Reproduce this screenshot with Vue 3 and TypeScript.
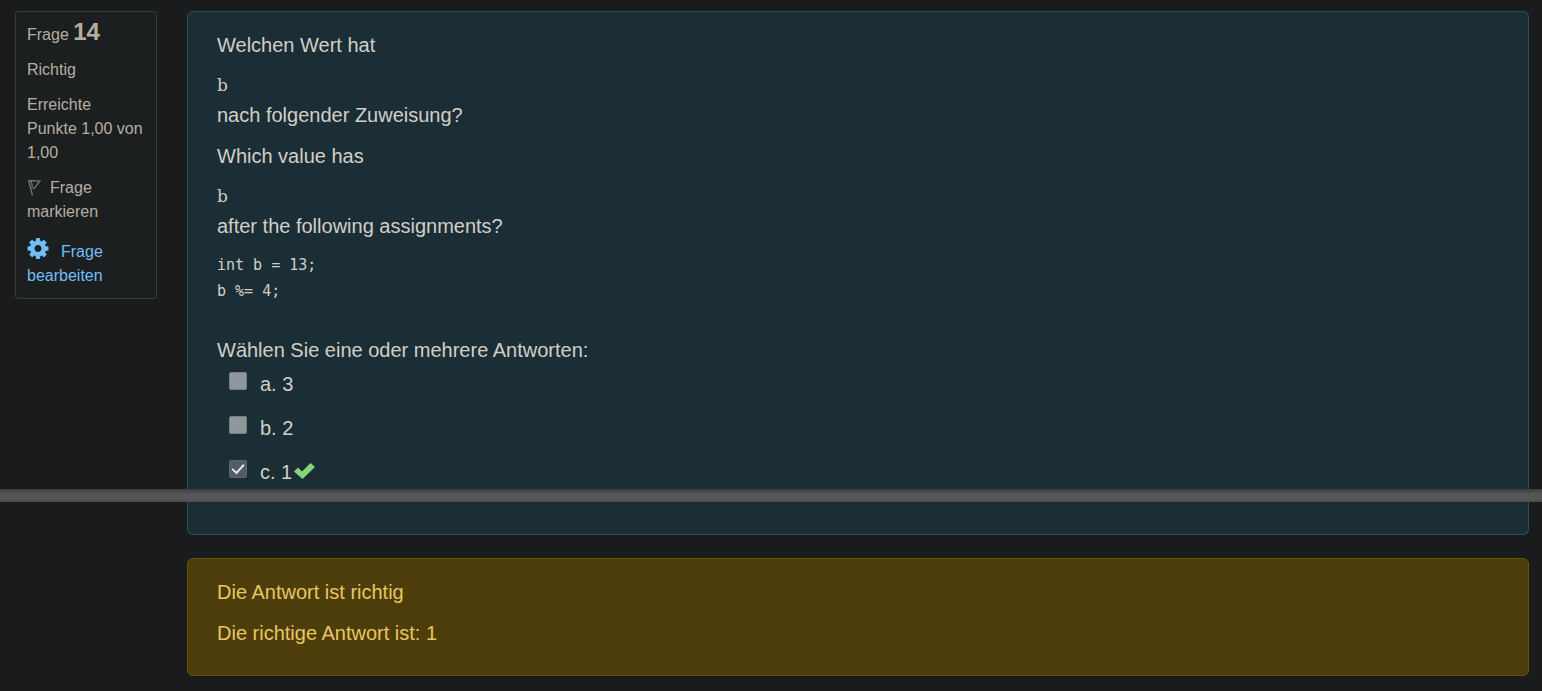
<script setup lang="ts">
import { ref } from 'vue'

interface Answer {
  id: string
  label: string
  correct: boolean
}

const answers: Answer[] = [
  { id: 'answer-a', label: 'a. 3', correct: false },
  { id: 'answer-b', label: 'b. 2', correct: false },
  { id: 'answer-c', label: 'c. 1', correct: true },
]
const selected = ref<string[]>(['answer-c'])
const snippet = 'int b = 13;\nb %= 4;'
</script>

<template>
  <main class="page">
    <div class="question">
      <aside class="info">
        <h3 class="number">Frage <strong>14</strong></h3>
        <p class="state">Richtig</p>
        <p class="grade">Erreichte Punkte 1,00 von 1,00</p>
        <button type="button" class="flag">
          <svg class="flag-icon" viewBox="0 0 16 18" aria-hidden="true">
            <path d="M1.500 1.500L13 2L7 9.500L3.500 8.500M1.500 1.500L5.500 16.500M4 2.500L5.500 7.500" />
          </svg>Frage markieren
        </button>
        <a href="#" class="edit">
          <svg class="gear-icon" viewBox="0 0 1536 1536" aria-hidden="true">
            <path d="M1024 768q0-106-75-181t-181-75-181 75-75 181 75 181 181 75 181-75 75-181zm512-109v222q0 12-8 23t-20 13l-185 28q-19 54-39 91 35 50 107 138 10 12 10 25t-9 23q-27 37-99 108t-94 71q-12 0-26-9l-138-108q-44 23-91 38-16 136-29 186-7 28-36 28H657q-14 0-24.500-8.500T621 1506l-28-184q-49-16-90-37l-141 107q-10 9-25 9-14 0-25-11-126-114-165-168-7-10-7-23 0-12 8-23 15-21 51-66.500t54-70.500q-27-50-41-99L29 913q-13-2-21-12.500T0 877V655q0-12 8-23t19-13l186-28q14-46 39-92-40-57-107-138-10-12-10-24 0-10 9-23 26-36 98.500-107.500T337 135q13 0 26 10l138 107q44-23 91-38 16-136 29-186 7-28 36-28h222q14 0 24.500 8.500T915 30l28 184q49 16 90 37l142-107q9-9 24-9 13 0 25 10 129 119 165 170 7 8 7 22 0 12-8 23-15 21-51 66.500t-54 70.500q26 50 41 98l183 28q13 2 21 12.500t8 23.500z" />
          </svg>Frage bearbeiten
        </a>
      </aside>

      <section class="panel panel-start">
        <p>Welchen Wert hat</p>
        <div class="passage">
          <code>b</code>
          <p>nach folgender Zuweisung?</p>
        </div>
        <p>Which value has</p>
        <div class="passage">
          <code>b</code>
          <p>after the following assignments?</p>
        </div>
        <pre>{{ snippet }}</pre>
        <fieldset>
          <legend>Wählen Sie eine oder mehrere Antworten:</legend>
          <div class="answers">
            <div v-for="answer in answers" :key="answer.id" class="answer">
              <input :id="answer.id" v-model="selected" type="checkbox" :value="answer.id" />
              <label :for="answer.id">{{ answer.label }}</label>
              <svg v-if="answer.correct" class="correct" viewBox="0 0 21 16" role="img" aria-label="Richtig">
                <path d="M0 8.500L4 4.500L8 8.500L16.500 0L21 4L8.500 16Z" />
              </svg>
            </div>
          </div>
        </fieldset>
      </section>
    </div>

    <hr class="divider" />

    <div class="rest">
      <div class="panel panel-end"></div>
      <section class="feedback">
        <p>Die Antwort ist richtig</p>
        <p>Die richtige Antwort ist: 1</p>
      </section>
    </div>
  </main>
</template>

<style>
body {
  margin: 0;
  background: #1a1b1c;
}
</style>

<style scoped>
* {
  box-sizing: border-box;
}

.page {
  font: 20px/30px "Liberation Sans", Arial, sans-serif;
  color: #d1cec8;
}

p,
h3,
pre {
  margin: 0;
}

.question {
  display: grid;
  grid-template-columns: 142px minmax(0, 1fr);
  gap: 30px;
  align-items: start;
  padding: 11px 13px 0 15px;
}

.info {
  display: flex;
  flex-direction: column;
  align-items: flex-start;
  gap: 11px;
  padding: 10px 11px;
  border: 1px solid #393c3e;
  border-radius: 3px;
  background: #1c1f20;
  color: #b5aea3;
  font-size: 16px;
  line-height: 24px;
}

.number {
  font-size: 16px;
  font-weight: 400;
}

.number strong {
  font-size: 24px;
  line-height: 20px;
}

.flag {
  padding: 0;
  border: 0;
  background: none;
  color: inherit;
  font: inherit;
  text-align: left;
}

.flag-icon {
  width: 16px;
  height: 18px;
  margin-right: 7px;
  vertical-align: -4px;
  fill: none;
  stroke: #77736e;
  stroke-width: 1.3;
}

.edit {
  padding-top: 3px;
  color: #71bdf8;
  text-decoration: none;
}

.gear-icon {
  width: 22px;
  height: 21px;
  margin-right: 12px;
  vertical-align: -2px;
  fill: #71bdf8;
}

.panel {
  border: 1px solid #285058;
  background: #1c2e35;
}

.panel-start {
  display: flex;
  flex-direction: column;
  gap: 11px;
  padding: 18px 29px 0;
  border-bottom: 0;
  border-radius: 6px 6px 0 0;
}

code {
  display: block;
  font: 17px/29px "DejaVu Serif", serif;
}

pre {
  font: 15px/26px "DejaVu Sans Mono", monospace;
}

fieldset {
  min-width: 0;
  margin: 20px 0 0;
  padding: 0;
  border: 0;
}

legend {
  padding: 0;
}

.answers {
  display: flex;
  flex-direction: column;
  gap: 14px;
  padding: 4px 0 2px 12px;
}

.answer {
  display: flex;
  align-items: center;
}

input {
  appearance: none;
  display: grid;
  place-items: center;
  width: 18px;
  height: 18px;
  margin: 0 13px 6px 0;
  border: 1px solid #777f85;
  border-radius: 2px;
  background: #8d979c;
}

input:checked {
  border-color: #5d6572;
  background: #535b69;
}

input:checked::before {
  content: "";
  box-sizing: border-box;
  width: 12px;
  height: 7px;
  border: solid #e6e6e6;
  border-width: 0 0 2px 2px;
  transform: translateY(-2px) rotate(-48deg);
}

.correct {
  width: 21px;
  height: 16px;
  margin: 0 0 2px 2px;
  fill: #83d67b;
}

.divider {
  height: 13px;
  margin: 0;
  border: 0;
  background: linear-gradient(#3d3e40, #545658 40%, #545658 80%, #494b4d);
}

.rest {
  display: flex;
  flex-direction: column;
  gap: 23px;
  padding: 0 13px 15px 187px;
}

.panel-end {
  height: 33px;
  border-top: 0;
  border-radius: 0 0 6px 6px;
}

.feedback {
  display: flex;
  flex-direction: column;
  gap: 11px;
  padding: 18px 29px 27px;
  border: 1px solid #69500d;
  border-radius: 6px;
  background: #4d3d0a;
  color: #e8c661;
}
</style>
